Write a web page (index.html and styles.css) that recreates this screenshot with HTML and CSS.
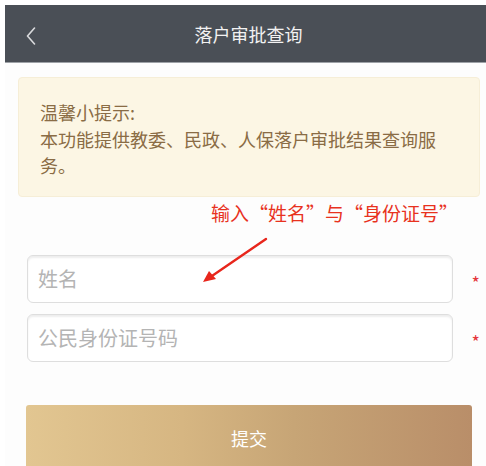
FILE: index.html
```html
<!DOCTYPE html>
<html lang="zh-CN">
<head>
    <meta charset="UTF-8">
    <meta name="viewport" content="width=device-width, initial-scale=1.0">
    <title>落户审批查询</title>
    <link rel="stylesheet" href="styles.css">
</head>
<body>
    <div class="page">
        <header class="header">
            <svg class="back-icon" viewBox="0 0 10 18" fill="none">
                <path d="M8.5 1 L1.5 9 L8.5 17" stroke="#d9dadc" stroke-width="1.6" stroke-linecap="round" stroke-linejoin="round"/>
            </svg>
            <h1 class="page-title">落户审批查询</h1>
        </header>

        <main class="main-content">
            <div class="tip-box">
                <p>温馨小提示:</p>
                <p>本功能提供教委、民政、人保落户审批结果查询服务。</p>
            </div>

            <form class="query-form" onsubmit="return false">
                <div class="annotation">输入“姓名”与“身份证号”</div>
                <svg class="annotation-arrow" viewBox="0 0 70 50">
                    <path d="M65 4 L8 43" stroke="#e8261c" stroke-width="2.4" stroke-linecap="round"/>
                    <path d="M2 47 L8 36 L15 44 Z" fill="#e8261c"/>
                </svg>

                <div class="field-row">
                    <input type="text" class="field-input" placeholder="姓名">
                    <span class="required">*</span>
                </div>
                <div class="field-row">
                    <input type="text" class="field-input" placeholder="公民身份证号码">
                    <span class="required">*</span>
                </div>

                <button type="submit" class="submit-button">提交</button>
            </form>
        </main>
    </div>
</body>
</html>
```

FILE: styles.css
```css
* {
    margin: 0;
    padding: 0;
    box-sizing: border-box;
}

body {
    font-family: "Noto Sans CJK SC", "Noto Sans", sans-serif;
    background-color: #ffffff;
    color: #333333;
    overflow: hidden;
}

.page {
    padding: 5px 0 0 5px;
}

.header {
    position: relative;
    height: 58px;
    background-color: #4a4f56;
    border-bottom: 1px solid #9ea2a7;
    display: flex;
    align-items: center;
    justify-content: center;
}

.back-icon {
    position: absolute;
    left: 21px;
    top: 22px;
    width: 10px;
    height: 18px;
}

.page-title {
    font-size: 18px;
    font-weight: 400;
    color: #f2f2f2;
    padding-left: 6px;
}

.main-content {
    padding: 14px 6px 0 13px;
    background-color: #fdfdfd;
}

.tip-box {
    background-color: #fcf6e4;
    border: 1px solid #f6eed7;
    border-radius: 4px;
    padding: 21px 40px 17px 21px;
    font-size: 18px;
    line-height: 26.5px;
    color: #8a6c45;
}

.query-form {
    position: relative;
}

.annotation {
    margin: 1px 0 27px;
    padding-left: 193px;
    font-size: 19px;
    line-height: 30px;
    color: #e8321e;
    white-space: nowrap;
}

.annotation-arrow {
    position: absolute;
    left: 183px;
    top: 37px;
    width: 70px;
    height: 50px;
}

.field-row {
    display: flex;
    align-items: center;
    margin-left: 9px;
}

.field-row + .field-row {
    margin-top: 11px;
}

.field-input {
    width: 426px;
    height: 48px;
    border: 1px solid #dedede;
    border-radius: 6px;
    box-shadow: inset 0 2px 2px rgba(0, 0, 0, 0.07);
    background: #ffffff;
    padding: 0 10px;
    font-family: inherit;
    font-size: 20px;
    color: #333333;
    outline: none;
}

.field-input::placeholder {
    color: #b4b4b4;
}

.required {
    margin-left: 19px;
    font-size: 18px;
    color: #e5343a;
    line-height: 1;
    padding-top: 6px;
}

.submit-button {
    display: block;
    width: 446px;
    height: 66px;
    margin: 43px 0 0 8px;
    border: none;
    border-radius: 3px;
    background: linear-gradient(90deg, #e2c691 0%, #d6b682 35%, #c7a576 60%, #b98e69 100%);
    color: #ffffff;
    font-family: inherit;
    font-size: 18px;
    cursor: pointer;
}
```
